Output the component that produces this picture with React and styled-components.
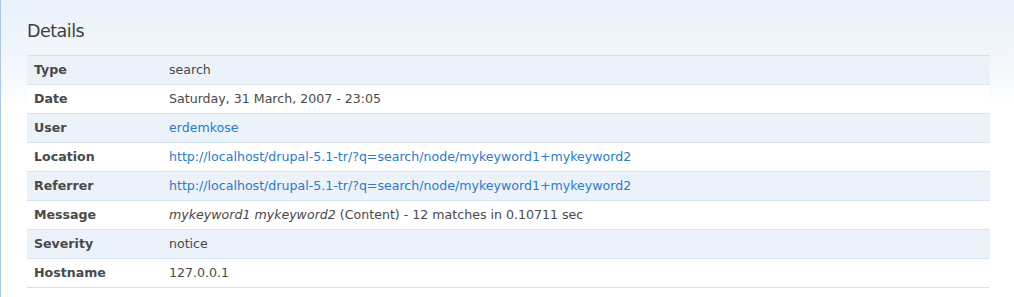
import React from "react";
import styled, { createGlobalStyle } from "styled-components";

const GlobalStyle = createGlobalStyle`
  html, body {
    margin: 0;
    padding: 0;
    background: #ffffff;
  }
  body {
    font-family: "DejaVu Sans", Verdana, sans-serif;
    font-size: 12.6px;
    color: #494949;
  }
`;

const Panel = styled.div`
  width: 1014px;
  height: 297px;
  box-sizing: border-box;
  border-left: 1px solid #a9c9e8;
  background: linear-gradient(to bottom, #e9f1f9 0px, #f4f8fc 70px, #ffffff 110px);
  padding: 19px 24px 0 26px;
`;

const Title = styled.h2`
  margin: 0 0 11px 0;
  font-family: "DejaVu Sans", Verdana, sans-serif;
  font-size: 17.5px;
  letter-spacing: -0.5px;
  font-weight: normal;
  color: #404040;
  line-height: 25px;
`;

const Table = styled.table`
  width: 963px;
  border-collapse: collapse;
  border-top: 1px solid #d3e3f2;
`;

const Row = styled.tr`
  background: ${(p) => (p.$odd ? "#ebf2fa" : "#ffffff")};
  border-bottom: 1px solid ${(p) => (p.$last ? "#d6e0ea" : "#d3e3f2")};
`;

const Label = styled.th`
  width: 135px;
  text-align: left;
  font-weight: bold;
  color: #494949;
  padding: 0 0 1px 7px;
  height: 27px;
`;

const Value = styled.td`
  padding: 0 0 1px 0;
  color: #494949;
`;

const Link = styled.a`
  color: #2a7ad0;
  text-decoration: none;
`;

const rows = [
  ["Type", "search"],
  ["Date", "Saturday, 31 March, 2007 - 23:05"],
  ["User", <Link href="#">erdemkose</Link>],
  ["Location", <Link href="#">http://localhost/drupal-5.1-tr/?q=search/node/mykeyword1+mykeyword2</Link>],
  ["Referrer", <Link href="#">http://localhost/drupal-5.1-tr/?q=search/node/mykeyword1+mykeyword2</Link>],
  [
    "Message",
    <>
      <em>mykeyword1 mykeyword2</em> (Content) - 12 matches in 0.10711 sec
    </>,
  ],
  ["Severity", "notice"],
  ["Hostname", "127.0.0.1"],
];

export default function App() {
  return (
    <>
      <GlobalStyle />
      <Panel>
        <Title>Details</Title>
        <Table>
          <tbody>
            {rows.map(([label, value], i) => (
              <Row key={label} $odd={i % 2 === 0} $last={i === rows.length - 1}>
                <Label>{label}</Label>
                <Value>{value}</Value>
              </Row>
            ))}
          </tbody>
        </Table>
      </Panel>
    </>
  );
}
